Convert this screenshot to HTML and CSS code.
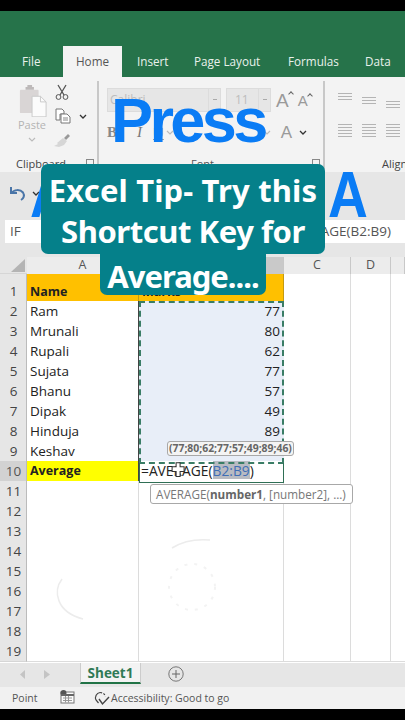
FILE: index.html
```html
<!DOCTYPE html>
<html lang="en">
<head>
<meta charset="utf-8">
<title>Excel Tip</title>
<link rel="stylesheet" href="styles.css">
</head>
<body>
<div class="screen">
  <div class="letterbox top"></div>
  <header class="titlebar">
    <nav class="tabs">
      <span class="tab t-file">File</span>
      <span class="tab active">Home</span>
      <span class="tab t-insert">Insert</span>
      <span class="tab t-page">Page Layout</span>
      <span class="tab t-form">Formulas</span>
      <span class="tab t-data">Data</span>
    </nav>
  </header>

  <section class="ribbon">
    <div class="group clip">
      <div class="group-body clip-body">
        <div class="paste">
          <svg width="28" height="33" viewBox="0 0 30 35"><rect x="1" y="6" width="20" height="25" rx="1" fill="#d9d5d5"/><path d="M7 6V3h2V1h5v2h2v3z" fill="#bdb9b9"/><path d="M14 13h9l6 6v16H14z" fill="#fbfbfb" stroke="#c8c8c8"/><path d="M23 13v6h6" fill="none" stroke="#c8c8c8"/></svg>
          <span class="paste-label">Paste</span>
          <svg width="8" height="5" viewBox="0 0 8 5"><path d="M1 1l3 3 3-3" fill="none" stroke="#bbb" stroke-width="1.2"/></svg>
        </div>
        <div class="clip-tools">
          <svg width="14" height="16" viewBox="0 0 14 16"><path d="M3 1l6 10M11 1L5 11" stroke="#555" stroke-width="1.3" fill="none"/><circle cx="3.5" cy="13" r="2.4" fill="none" stroke="#555"/><circle cx="10.5" cy="13" r="2.4" fill="none" stroke="#555"/></svg>
          <div class="copy-row">
            <svg width="16" height="16" viewBox="0 0 16 16"><path d="M1 1h6l2 2v3H5v6H1z" fill="#fff" stroke="#777"/><path d="M6 6h6l3 3v6H6z" fill="#fff" stroke="#777"/><path d="M8 10h5M8 12h5" stroke="#888"/></svg>
            <svg class="chev" width="8" height="5" viewBox="0 0 8 5"><path d="M1 1l3 3 3-3" fill="none" stroke="#333" stroke-width="1.3"/></svg>
          </div>
          <svg class="brush" width="18" height="15" viewBox="0 0 18 15"><path d="M11 5l4-4 2 2-4 4z" fill="#999"/><path d="M10 5l4 3-3 4-5 2-5-1 4-2-1-1z" fill="#d6d6d6"/></svg>
        </div>
      </div>
      <div class="group-label">Clipboard<i class="launcher"></i></div>
    </div>

    <div class="group font">
      <div class="group-body font-body">
        <div class="font-row first">
          <span class="combo name">Calibri<i class="combo-arrow"></i></span>
          <span class="combo size">11<i class="combo-arrow"></i></span>
          <span class="grow-a big">A</span>
          <span class="grow-a small">A</span>
        </div>
        <div class="font-row second">
          <b class="fmt">B</b>
          <i class="fmt it">I</i>
          <u class="fmt un">U</u>
          <svg class="chev faint-one" width="8" height="5" viewBox="0 0 8 5"><path d="M1 1l3 3 3-3" fill="none" stroke="#bbb" stroke-width="1.2"/></svg>
          <span class="fmt-spacer"></span>
          <svg class="chev faint-two" width="8" height="5" viewBox="0 0 8 5"><path d="M1 1l3 3 3-3" fill="none" stroke="#bbb" stroke-width="1.2"/></svg>
          <span class="grow-a color">A</span>
          <svg class="chev" width="8" height="5" viewBox="0 0 8 5"><path d="M1 1l3 3 3-3" fill="none" stroke="#333" stroke-width="1.3"/></svg>
        </div>
      </div>
      <div class="group-label center">Font<i class="launcher"></i></div>
    </div>

    <div class="group align">
      <div class="group-body align-body">
        <div class="align-row">
          <span class="lines l3 va-top"></span>
          <span class="lines l3 va-mid"></span>
          <span class="lines l3 va-bot"></span>
        </div>
        <div class="align-row lower">
          <span class="lines l5"></span>
          <span class="lines l5"></span>
          <span class="lines l5"></span>
        </div>
      </div>
      <div class="group-label end">Alignment</div>
    </div>
  </section>

  <section class="qat">
    <svg width="17" height="15" viewBox="0 0 17 15"><path d="M2 1v6h6" fill="none" stroke="#4a75a8" stroke-width="2"/><path d="M2.5 7C5 3.500 11 3 14 6.500c2 3 .5 6-2 7.500" fill="none" stroke="#4a75a8" stroke-width="2"/></svg>
    <svg width="8" height="5" viewBox="0 0 8 5"><path d="M1 1l3 3 3-3" fill="none" stroke="#333" stroke-width="1.3"/></svg>
  </section>

  <section class="formula">
    <div class="namebox">IF</div>
    <div class="fx">=AVERAGE(B2:B9)</div>
  </section>
  <div class="gap"></div>

  <main class="sheet">
    <div class="row head">
      <div class="rh corner"><svg width="16" height="15" viewBox="0 0 16 15"><path d="M15 1v13H1z" fill="#b4b4b4"/></svg></div>
      <div class="ch">A</div><div class="ch sel">B</div><div class="ch">C</div><div class="ch">D</div><div class="ch"></div>
    </div>
    <div class="row r1">
      <div class="rh">1</div><div class="c orange b">Name</div><div class="c orange b">Marks</div><div class="c"></div><div class="c"></div><div class="c"></div>
    </div>
    <div class="row"><div class="rh">2</div><div class="c d">Ram</div><div class="c d n s">77</div><div class="c"></div><div class="c"></div><div class="c"></div></div>
    <div class="row"><div class="rh">3</div><div class="c d">Mrunali</div><div class="c d n s">80</div><div class="c"></div><div class="c"></div><div class="c"></div></div>
    <div class="row"><div class="rh">4</div><div class="c d">Rupali</div><div class="c d n s">62</div><div class="c"></div><div class="c"></div><div class="c"></div></div>
    <div class="row"><div class="rh">5</div><div class="c d">Sujata</div><div class="c d n s">77</div><div class="c"></div><div class="c"></div><div class="c"></div></div>
    <div class="row"><div class="rh">6</div><div class="c d">Bhanu</div><div class="c d n s">57</div><div class="c"></div><div class="c"></div><div class="c"></div></div>
    <div class="row"><div class="rh">7</div><div class="c d">Dipak</div><div class="c d n s">49</div><div class="c"></div><div class="c"></div><div class="c"></div></div>
    <div class="row"><div class="rh">8</div><div class="c d">Hinduja</div><div class="c d n s">89</div><div class="c"></div><div class="c"></div><div class="c"></div></div>
    <div class="row"><div class="rh">9</div><div class="c d">Keshav</div><div class="c d n s">46</div><div class="c"></div><div class="c"></div><div class="c"></div></div>
    <div class="row"><div class="rh cur">10</div><div class="c d yellow b">Average</div><div class="c d edit">=AVERAGE(<span class="ref">B2:B9</span>)</div><div class="c"></div><div class="c"></div><div class="c"></div></div>
    <div class="row"><div class="rh">11</div><div class="c"></div><div class="c"></div><div class="c"></div><div class="c"></div><div class="c"></div></div>
    <div class="row"><div class="rh">12</div><div class="c"></div><div class="c"></div><div class="c"></div><div class="c"></div><div class="c"></div></div>
    <div class="row"><div class="rh">13</div><div class="c"></div><div class="c"></div><div class="c"></div><div class="c"></div><div class="c"></div></div>
    <div class="row"><div class="rh">14</div><div class="c"></div><div class="c"></div><div class="c"></div><div class="c"></div><div class="c"></div></div>
    <div class="row"><div class="rh">15</div><div class="c"></div><div class="c"></div><div class="c"></div><div class="c"></div><div class="c"></div></div>
    <div class="row"><div class="rh">16</div><div class="c"></div><div class="c"></div><div class="c"></div><div class="c"></div><div class="c"></div></div>
    <div class="row"><div class="rh">17</div><div class="c"></div><div class="c"></div><div class="c"></div><div class="c"></div><div class="c"></div></div>
    <div class="row"><div class="rh">18</div><div class="c"></div><div class="c"></div><div class="c"></div><div class="c"></div><div class="c"></div></div>
    <div class="row"><div class="rh">19</div><div class="c"></div><div class="c"></div><div class="c"></div><div class="c"></div><div class="c"></div></div>

    <div class="marquee range"></div>
    <div class="marquee active-cell"></div>
    <div class="tip values">(77;80;62;77;57;49;89;46)</div>
    <div class="tip syntax">AVERAGE(<b>number1</b>, [number2], ...)</div>
    <svg class="cursor" width="15" height="16" viewBox="0 0 18 20"><path d="M6 1h5v5h5v6h-5v6H6v-6H1V6h5z" fill="#fff" stroke="#333" stroke-width="1.3"/></svg>
    <svg class="ripple" width="170" height="90" viewBox="0 0 170 90"><path d="M14 43C5 55 8 76 35 83M124 12C135 5 150 3 162 4" fill="none" stroke="#ececec" stroke-width="1.500"/><circle cx="144" cy="51" r="23" fill="none" stroke="#f3f3f3" stroke-width="2" stroke-dasharray="3 7"/></svg>
  </main>

  <section class="sheetbar">
    <svg class="nav" width="6" height="9" viewBox="0 0 6 9"><path d="M5 0v9L0 4.500z" fill="#c4c4c4"/></svg>
    <svg class="nav next" width="6" height="9" viewBox="0 0 6 9"><path d="M0 0v9l6-4.500z" fill="#c4c4c4"/></svg>
    <div class="sheet-tab">Sheet1</div>
    <svg class="plus" width="16" height="16" viewBox="0 0 16 16"><circle cx="8" cy="8" r="7.200" fill="none" stroke="#777"/><path d="M8 4v8M4 8h8" stroke="#666"/></svg>
  </section>

  <footer class="status">
    <span class="point">Point</span>
    <svg class="macro" width="15" height="14" viewBox="0 0 15 14"><rect x="1" y="2" width="13" height="11" fill="#fafafa" stroke="#777"/><circle cx="3.500" cy="3" r="3" fill="#555"/><path d="M1 5h13" stroke="#666" stroke-width="2"/><path d="M3 8h9M3 10.500h9M5.500 6v6.500M8.500 6v6.500" stroke="#999"/></svg>
    <svg class="access" width="16" height="15" viewBox="0 0 16 15"><path d="M6 1.500C2.500 2 .5 6 2 9l2.500 3" fill="none" stroke="#444" stroke-width="1.200"/><path d="M6 1.500c3 0 5 2 5.500 4" fill="none" stroke="#444" stroke-width="1.200" stroke-dasharray="2 1.500"/><path d="M5 8l3.500 5L15 6" fill="none" stroke="#444" stroke-width="1.400"/></svg>
    <span class="acc-text">Accessibility: Good to go</span>
  </footer>
  <div class="letterbox bottom"></div>

  <div class="big-letter left">A</div>
  <div class="big-letter right">A</div>
  <div class="press">Press</div>
  <div class="card">
    <div class="card-main"><span class="line-one">Excel Tip- Try this</span><br><span class="line-two">Shortcut Key for</span></div>
    <div class="card-tail">Average....</div>
  </div>
</div>
</body>
</html>
```
FILE: styles.css
```css
* { box-sizing: border-box; }
html, body { margin: 0; padding: 0; }
body { background: #000; font-family: "Open Sans", "Noto Sans", sans-serif; }
.screen { position: relative; width: 405px; height: 720px; overflow: hidden; display: flex; flex-direction: column; background: #fff; }
.letterbox { background: #000; flex: none; }
.letterbox.top { height: 11px; }
.letterbox.bottom { height: 11px; }

.titlebar { height: 66px; flex: none; background: #26734a; display: flex; align-items: flex-end; }
.tabs { display: flex; height: 31px; align-items: stretch; width: 100%; }
.tab { font-size: 11.700px; color: #e9f1ec; line-height: 31px; white-space: nowrap; }
.t-file { margin-left: 22px; width: 41px; }
.tab.active { width: 59px; background: #f3f3f3; color: #555; text-align: center; }
.t-insert { margin-left: 15px; width: 57px; }
.t-page { width: 94px; }
.t-form { width: 77px; }

.ribbon { height: 95px; flex: none; background: #f3f3f3; display: flex; color: #666; }
.group { position: relative; display: flex; flex-direction: column; flex: none; }
.group.clip { width: 99px; border-right: 2px solid #c8c8c8; margin: 4px 0 0; }
.group.font { width: 226px; border-right: 2px solid #c8c8c8; margin: 4px 0 0; }
.group.align { flex: 1; min-width: 0; overflow: hidden; margin: 4px 0 0; }
.group-body { flex: 1; min-height: 0; }
.group-label { position: relative; height: 20px; font-size: 11px; line-height: 24px; color: #444; padding-left: 16px; white-space: nowrap; }
.group-label.center { padding-left: 92px; color: #555; }
.group-label.end { padding-left: 57px; }
.launcher { position: absolute; right: 3px; top: 7px; width: 8px; height: 8px; border: 1px solid #888; }

.clip-body { display: flex; padding: 3px 0 0 18px; gap: 4px; }
.paste { display: flex; flex-direction: column; align-items: center; width: 30px; }
.paste-label { font-size: 11px; line-height: 16px; color: #b4b4b4; margin-left: -2px; }
.paste svg:last-child { margin-top: 4px; margin-left: -3px; }
.clip-tools { display: flex; flex-direction: column; align-items: flex-start; padding-left: 2px; }
.clip-tools > svg:first-child { margin-left: 1px; }
.copy-row { display: flex; align-items: center; gap: 5px; margin-top: 8px; margin-left: 1px; }
.copy-row .chev { margin-left: 3px; }
.brush { margin-top: 9px; margin-left: -1px; }

.font-body { padding: 7px 0 0 8px; display: flex; flex-direction: column; }
.font-row { display: flex; align-items: center; }
.font-row.first { height: 24px; gap: 5px; }
.font-row.second { margin-top: 8px; height: 24px; }
.combo { position: relative; display: block; height: 24px; background: #e6e6e6; border: 1px solid #dcdcdc; font-size: 12px; line-height: 22px; color: #bdbdbd; padding-left: 2px; }
.combo.name { width: 114px; }
.combo.size { width: 45px; padding-left: 8px; }
.combo-arrow { position: absolute; right: 0; top: 0; bottom: 0; width: 12px; border-left: 1px solid #dcdcdc; }
.combo-arrow::after { content: ""; position: absolute; left: 4px; top: 10px; width: 4px; height: 1px; background: #aaa; }
.grow-a { position: relative; font-family: "Liberation Sans", sans-serif; color: #9a9a9a; line-height: 1; }
.grow-a.big { font-size: 19px; margin-left: 0; }
.grow-a.small { font-size: 15px; margin-left: 4px; }
.grow-a.big::after, .grow-a.small::after { content: ""; position: absolute; top: 1px; right: -4px; width: 3px; height: 3px; border-left: 1px solid #666; border-top: 1px solid #666; transform: rotate(45deg); }
.grow-a.color { font-size: 17px; margin-right: 7px; }
.fmt { font-family: "Liberation Serif", serif; font-size: 15px; color: #999; }
.fmt.it { margin-left: 20px; color: #777; }
.fmt.un { font-family: "Liberation Sans", sans-serif; margin-left: 11px; }
.fmt-spacer { width: 89px; flex: none; }
.faint-one { margin-left: 2px; }
.faint-two { margin-right: 10px; }
.font-row.second .fmt:first-child { color: #888; }

.align-body { display: flex; flex-direction: column; padding: 12px 0 0 13px; }
.align-row { display: flex; gap: 10px; height: 24px; }
.align-row.lower { margin-top: 7px; height: 18px; }
.lines { display: block; width: 14px; background: repeating-linear-gradient(#b4b4b4 0 1px, transparent 1px 3px); }
.lines.l3 { height: 7px; }
.lines.l5 { height: 15px; }
.va-mid { margin-top: 4px; }
.va-bot { margin-top: 8px; }

.qat { height: 48px; flex: none; background: #e6e6e6; display: flex; align-items: center; gap: 6px; padding: 0 0 6px 9px; }
.formula { height: 23px; flex: none; background: #e6e6e6; display: flex; padding-left: 5px; gap: 3px; font-size: 13.500px; color: #555; line-height: 23px; }
.namebox { width: 90px; background: #fff; padding-left: 5px; }
.fx { flex: 1; background: #fff; text-align: right; padding-right: 14px; }
.gap { height: 14px; flex: none; background: #e6e6e6; }

.sheet { position: relative; flex: none; height: 406px; overflow: hidden; font-size: 13.500px; color: #222; }
.row { display: grid; grid-template-columns: 27px 112px 145px 67px 40px 14px; height: 20px; }
.row.head { height: 17px; }
.row.r1 { height: 27px; }
.rh { background: #e6e6e6; color: #444; font-size: 13.500px; text-align: center; line-height: 20px; border-right: 1px solid #bbb; border-bottom: 1px solid #d6d6d6; padding-left: 1px; }
.r1 .rh { line-height: 35px; }
.rh.corner { padding: 1px 0 0 8px; line-height: 0; border-right: 0; background: #e6e6e6; }
.rh.cur { background: #d2d2d2; color: #555; }
.ch { background: #ececec; text-align: center; font-size: 12.500px; line-height: 16px; color: #555; border-right: 1px solid #c8c8c8; }
.ch.sel { background: #c9c9c9; color: transparent; }
.c { border-right: 1px solid #dcdcdc; border-bottom: 1px solid #dcdcdc; padding: 0 3px; line-height: 20px; white-space: nowrap; background: #fff; }
.c:last-child { border-right: 0; }
.c.d { border-right-color: #444; border-bottom-color: #555; }
.c.b { font-weight: 700; font-size: 12.500px; }
.c.orange { background: #ffc000; border-bottom-color: #555; border-right-color: #c49a10; line-height: 35px; }
.c.yellow { background: #ffff00; }
.c.n { text-align: right; padding-right: 3px; }
.c.s { background: #e8eef8; border-right-color: #e8eef8; }
.edit { color: #222; padding-left: 2px; font-size: 13.800px; border-right-color: #fff; }
.ref { display: inline-block; height: 18px; background: #b8bbc2; color: #3f6eb5; }

.marquee { position: absolute; pointer-events: none; }
.range { left: 139px; top: 44px; width: 145px; height: 163px; border: 2px dashed #3a7d66; }
.active-cell { left: 139px; top: 206px; width: 145px; height: 20px; border: 1.500px solid #2f6f55; border-top: 0; }
.tip { position: absolute; background: #fff; border: 1px solid #a8a8a8; border-radius: 3px; color: #777; white-space: nowrap; }
.values { left: 167px; top: 184px; height: 15px; font-size: 10.400px; line-height: 13px; font-weight: 700; padding: 0 1px; color: #666; background: #f4f4f4; }
.syntax { left: 150px; top: 227px; width: 203px; height: 20px; font-size: 11.700px; line-height: 18px; padding-left: 5px; }
.syntax b { color: #666; }
.cursor { position: absolute; left: 171px; top: 205px; }
.ripple { position: absolute; left: 48px; top: 279px; }

.sheetbar { height: 24px; flex: none; background: #e6e6e6; display: flex; align-items: flex-start; }
.nav { margin: 7px 0 0 20px; }
.nav.next { margin-left: 18px; }
.sheet-tab { margin-left: 30px; width: 61px; height: 21px; background: #f3f3f3; border-bottom: 2px solid #217346; border-left: 1px solid #ccc; border-right: 1px solid #ccc; color: #2f7a56; font-weight: 700; font-size: 13.500px; line-height: 20px; text-align: center; }
.plus { margin: 3px 0 0 27px; }

.status { height: 22px; flex: none; background: #f1f1f1; display: flex; align-items: center; font-size: 10.500px; color: #555; }
.point { margin-left: 12px; width: 48px; }
.macro { margin-bottom: 2px; }
.access { margin-left: 19px; }
.acc-text { margin-left: 1px; }

.big-letter { position: absolute; top: 162px; font-family: "Liberation Sans", sans-serif; font-weight: 700; font-size: 65px; line-height: 1; color: #0a7cf5; transform: scaleX(.85); transform-origin: left top; }
.big-letter.left { left: 30px; }
.big-letter.right { left: 328px; }
.press { position: absolute; left: 111px; top: 89px; font-family: "Liberation Sans", sans-serif; font-weight: 700; font-size: 63px; line-height: 1; color: #0a7cf5; letter-spacing: -3.600px; }
.card { position: absolute; left: 41px; top: 164px; width: 284px; display: flex; flex-direction: column; align-items: center; color: #fff; font-family: "Noto Sans", sans-serif; font-weight: 700; font-size: 31px; line-height: 41px; text-align: center; white-space: nowrap; }
.card-main { width: 284px; height: 90px; background: #05808a; border-radius: 7px; padding-top: 6px; }
.line-one { letter-spacing: .15px; }
.line-two { letter-spacing: -.45px; }
.card-tail { width: 166px; height: 42px; margin-top: -1px; background: #05808a; border-radius: 0 0 7px 7px; line-height: 46px; letter-spacing: -1px; }
```
